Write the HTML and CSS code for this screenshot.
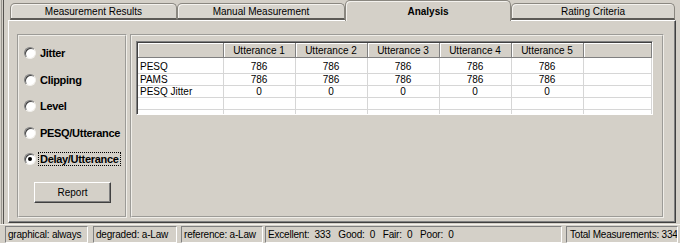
FILE: index.html
```html
<!DOCTYPE html>
<html lang="en">
<head>
    <meta charset="UTF-8">
    <title>Analysis</title>
    <link rel="stylesheet" href="styles.css">
</head>
<body>
    <div class="window">
        <div class="tabs">
            <div class="tab tab-1">Measurement Results</div>
            <div class="tab tab-2">Manual Measurement</div>
            <div class="tab tab-3 selected">Analysis</div>
            <div class="tab tab-4">Rating Criteria</div>
        </div>

        <div class="panel">
            <div class="group options">
                <label class="radio-row"><span class="radio"></span><span class="radio-label">Jitter</span></label>
                <label class="radio-row"><span class="radio"></span><span class="radio-label">Clipping</span></label>
                <label class="radio-row"><span class="radio"></span><span class="radio-label">Level</span></label>
                <label class="radio-row"><span class="radio"></span><span class="radio-label">PESQ/Utterance</span></label>
                <label class="radio-row"><span class="radio checked"></span><span class="radio-label focused">Delay/Utterance</span></label>
                <button class="btn">Report</button>
            </div>

            <div class="group results">
                <div class="grid">
                    <table>
                        <colgroup>
                            <col class="c-name">
                            <col class="c-val">
                            <col class="c-val">
                            <col class="c-val">
                            <col class="c-val">
                            <col class="c-val">
                            <col>
                        </colgroup>
                        <thead>
                            <tr>
                                <th></th>
                                <th>Utterance 1</th>
                                <th>Utterance 2</th>
                                <th>Utterance 3</th>
                                <th>Utterance 4</th>
                                <th>Utterance 5</th>
                                <th></th>
                            </tr>
                        </thead>
                        <tbody>
                            <tr class="first">
                                <td class="name">PESQ</td>
                                <td>786</td><td>786</td><td>786</td><td>786</td><td>786</td><td></td>
                            </tr>
                            <tr>
                                <td class="name">PAMS</td>
                                <td>786</td><td>786</td><td>786</td><td>786</td><td>786</td><td></td>
                            </tr>
                            <tr>
                                <td class="name">PESQ Jitter</td>
                                <td>0</td><td>0</td><td>0</td><td>0</td><td>0</td><td></td>
                            </tr>
                            <tr>
                                <td></td><td></td><td></td><td></td><td></td><td></td><td></td>
                            </tr>
                            <tr class="short">
                                <td></td><td></td><td></td><td></td><td></td><td></td><td></td>
                            </tr>
                        </tbody>
                    </table>
                </div>
            </div>
        </div>
    </div>

    <div class="statusbar">
        <div class="cell s-graph">graphical: always</div>
        <div class="cell s-deg">degraded: a-Law</div>
        <div class="cell s-ref">reference: a-Law</div>
        <div class="cell s-score">Excellent:  333   Good:  0   Fair:  0   Poor:  0</div>
        <div class="cell s-total">Total Measurements: 334</div>
    </div>
</body>
</html>
```

FILE: styles.css
```css
body {
    margin: 0;
    width: 680px;
    height: 243px;
    overflow: hidden;
    background-color: #d4d0c8;
    font-family: "Liberation Sans", Arial, sans-serif;
    font-size: 10px;
    color: #000;
}

.window {
    height: 224px;
    box-sizing: border-box;
    border-left: 1px solid #9a9790;
    margin-left: 1px;
    padding-left: 1px;
    position: relative;
}

.window::before {
    /* second dark line of the frame */
    content: "";
    position: absolute;
    left: 1px;
    top: 0;
    bottom: 0;
    width: 1px;
    background: #55534f;
}

/* tabs */

.tabs {
    display: flex;
    align-items: flex-end;
    height: 20px;
    padding-left: 7px;
}

.tab {
    height: 17px;
    box-sizing: border-box;
    border: 1px solid #8a8780;
    border-bottom: 2px solid #5c5a56;
    border-radius: 5px 5px 0 0;
    box-shadow: inset 1px 1px 0 #f4f2ee;
    text-align: center;
    line-height: 16px;
    background-color: #d8d5ce;
}

.tab-1 { width: 167px; }
.tab-2 { width: 168px; }
.tab-3 { width: 166px; }
.tab-4 { width: 164px; }

.tab.selected {
    height: 21px;
    margin-bottom: -1px;
    border-bottom: none;
    font-weight: bold;
    line-height: 22px;
    background-color: #d4d0c8;
    position: relative;
    z-index: 1;
}

/* tab page */

.panel {
    display: flex;
    gap: 3px;
    width: 668px;
    height: 203px;
    box-sizing: border-box;
    margin-left: 5px;
    border: 1px solid;
    border-color: #fff #404040 #404040 #fff;
    box-shadow: inset -1px -1px 0 #808080;
    padding: 13px 0 0 8px;
}

.group {
    height: 184px;
    box-sizing: border-box;
    border: 2px groove #f0eee9;
}

.options {
    width: 110px;
    padding: 10px 0 0 5px;
    display: flex;
    flex-direction: column;
    align-items: flex-start;
}

.radio-row {
    display: flex;
    align-items: center;
    height: 14px;
    margin-bottom: 12.5px;
}

.radio {
    width: 12px;
    height: 12px;
    box-sizing: border-box;
    border-radius: 50%;
    border: 1px solid;
    border-color: #808080 #f2f0ec #f2f0ec #808080;
    box-shadow: inset 1px 1px 0 #404040;
    background: #fff;
    margin-right: 2px;
    position: relative;
}

.radio.checked::after {
    content: "";
    position: absolute;
    left: 3px;
    top: 3px;
    width: 4px;
    height: 4px;
    border-radius: 50%;
    background: #000;
}

.radio-label {
    font-weight: bold;
    font-size: 11px;
    letter-spacing: -0.3px;
    padding: 0 1px;
    line-height: 12px;
    border: 1px solid transparent;
}

.radio-label.focused {
    border: 1px dotted #000;
}

.btn {
    margin: 3px 0 0 10px;
    width: 77px;
    height: 21px;
    font-family: inherit;
    font-size: 10px;
    color: #000;
    background-color: #d4d0c8;
    border: 1px solid;
    border-color: #fff #404040 #404040 #fff;
    box-shadow: inset -1px -1px 0 #808080;
    padding: 0;
}

/* results grid */

.results {
    width: 534px;
    padding: 5px 0 0 4px;
}

.grid {
    width: 517px;
    height: 74px;
    box-sizing: border-box;
    border: 1px solid;
    border-color: #808080 #fff #fff #808080;
    box-shadow: inset 1px 1px 0 #404040;
    background: #fff;
    padding: 1px 0 0 1px;
    overflow: hidden;
}

table {
    border-collapse: collapse;
    width: 514px;
    table-layout: fixed;
}

.c-name { width: 85px; }
.c-val { width: 72px; }

th {
    height: 14px;
    padding: 0;
    font-weight: normal;
    background-color: #d4d0c8;
    border-right: 1px solid #808080;
    border-bottom: 1px solid #808080;
    box-shadow: inset 1px 1px 0 #fff;
    text-align: center;
}

td {
    height: 11px;
    padding: 0;
    line-height: 11px;
    text-align: center;
    border-right: 1px solid #d6d6d6;
    border-bottom: 1px solid #d6d6d6;
}

td.name {
    text-align: left;
    padding-left: 2px;
}

tr.first td {
    height: 13px;
    padding-top: 2px;
}

tr.short td {
    height: 5px;
}

/* status bar */

.statusbar {
    display: flex;
    height: 19px;
    padding: 1px 0 0 5px;
    box-sizing: border-box;
    border-top: 1px solid #f4f2ee;
    letter-spacing: -0.2px;
}

.cell {
    height: 17px;
    box-sizing: border-box;
    border: 1px solid;
    border-color: #808080 #fff #fff #808080;
    padding-left: 2px;
    line-height: 15px;
    white-space: pre;
    overflow: hidden;
}

.s-graph { width: 83px; margin-right: 5px; }
.s-deg { width: 84px; margin-right: 4px; }
.s-ref { width: 82px; margin-right: 2px; }
.s-score { width: 297px; margin-right: 4px; }
.s-total { width: 112px; padding-left: 3px; }
```
